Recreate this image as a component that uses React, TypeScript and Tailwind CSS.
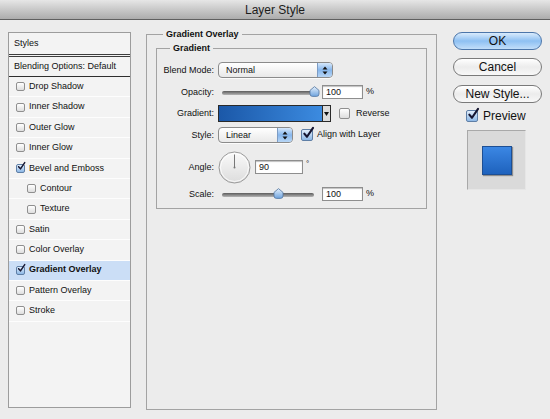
import React from "react";

const styleRows = [
  { label: "Drop Shadow" },
  { label: "Inner Shadow" },
  { label: "Outer Glow" },
  { label: "Inner Glow" },
  { label: "Bevel and Emboss", checked: true },
  { label: "Contour", indent: true },
  { label: "Texture", indent: true },
  { label: "Satin" },
  { label: "Color Overlay" },
  { label: "Gradient Overlay", checked: true, selected: true },
  { label: "Pattern Overlay" },
  { label: "Stroke" },
];

function CheckBox({ checked = false, size = "sm" }: { checked?: boolean; size?: "sm" | "md" | "lg" }) {
  const box =
    size === "sm" ? "w-[9px] h-[9px]" : size === "md" ? "w-[11px] h-[11px]" : "w-[12px] h-[12px]";
  const fill = checked
    ? "border-[#5f7fa6] from-[#e2eefb] to-[#8db8e6]"
    : "border-[#8f8f8f] from-white to-[#dedede]";
  return (
    <div className={`relative shrink-0 rounded-[2px] border bg-linear-to-b ${box} ${fill}`}>
      {checked && (
        <svg viewBox="0 0 12 12" className="absolute -top-[3px] left-0 w-[125%] h-[125%] overflow-visible">
          <path d="M2.2 6.4 L4.8 9.4 L10.6 0.8" fill="none" stroke="#151530" strokeWidth="2" strokeLinecap="round" strokeLinejoin="round" />
        </svg>
      )}
    </div>
  );
}

function Select({ value, width }: { value: string; width: string }) {
  return (
    <div className={`flex h-[16px] ${width} rounded-[4px] border border-[#8b8b8b] bg-linear-to-b from-white to-[#e9e9e9] shadow-[0_1px_0_rgba(255,255,255,0.8)] overflow-hidden`}>
      <div className="flex-1 pl-[7px] text-[9px] leading-[14px]">{value}</div>
      <div className="w-[15px] border-l border-[#7d9cc4] bg-linear-to-b from-[#d6e8fb] via-[#86b6ec] to-[#b8d6f5] flex items-center justify-center">
        <svg width="6" height="9" viewBox="0 0 6 9">
          <path d="M3 0.5 L5.5 3.5 H0.5 Z" fill="#111" />
          <path d="M3 8.5 L5.5 5.5 H0.5 Z" fill="#111" />
        </svg>
      </div>
    </div>
  );
}

function Slider({ value }: { value: number }) {
  return (
    <div className="relative w-[100px] h-[16px] ml-[4px]">
      <div className="absolute left-0 top-[7px] w-[92px] h-[4px] rounded-full bg-linear-to-b from-[#5c5c5c] to-[#b5b5b5]" />
      <svg width="11" height="11" viewBox="0 0 11 11" className="absolute top-[2px]" style={{ left: `${(value / 100) * 92 - 5.5}px` }}>
        <defs>
          <linearGradient id={`knob${value}`} x1="0" y1="0" x2="0" y2="1">
            <stop offset="0" stopColor="#e4f0fc" />
            <stop offset="1" stopColor="#6ea3de" />
          </linearGradient>
        </defs>
        <path d="M5.5 0.6 L10 4.4 V8 A2.4 2.4 0 0 1 7.6 10.4 H3.4 A2.4 2.4 0 0 1 1 8 V4.4 Z" fill={`url(#knob${value})`} stroke="#52759f" strokeWidth="0.8" />
      </svg>
    </div>
  );
}

function NumberBox({ value, width }: { value: string; width: string }) {
  return (
    <div className={`h-[14px] ${width} border border-[#8e8e8e] bg-white shadow-[inset_0_1px_1px_rgba(0,0,0,0.25)] pl-[3px] text-[9px] leading-[12px]`}>
      {value}
    </div>
  );
}

function Row({ label, className, children }: { label: string; className: string; children: React.ReactNode }) {
  return (
    <div className={`flex items-center ${className}`}>
      <div className="w-[57px] text-right text-[9px] leading-[11px] shrink-0">{label}</div>
      <div className="flex items-center ml-[4px]">{children}</div>
    </div>
  );
}

export default function App() {
  return (
    <div className="w-[550px] h-[419px] overflow-hidden bg-[#ececec] text-[#111] font-['Liberation_Sans',Arial,sans-serif]">
      <div className="h-[20px] border-b border-[#5f5f5f] bg-linear-to-b from-[#e6e6e6] to-[#acacac] flex items-center justify-center text-[12px] text-[#1c1c1c]">
        Layer Style
      </div>

      <div className="flex pl-[8px]">
        {/* styles list */}
        <div className="mt-[12px] w-[123px] h-[376px] border border-[#9c9c9c] bg-[#f3f3f3] text-[9px]">
          <div className="h-[24px] border-b-[3px] border-double border-[#3c3c3c] pl-[5px] pt-[5px] leading-[11px]">Styles</div>
          <div className="h-[20px] border-b border-[#2e2e2e] pl-[5px] flex items-center">Blending Options: Default</div>
          {styleRows.map((r) => (
            <div
              key={r.label}
              className={`h-[20.4px] flex items-center gap-[4px] border-b border-[#fdfdfd] ${r.indent ? "pl-[18px]" : "pl-[7px]"} ${r.selected ? "bg-[#cbdef6] font-bold" : ""}`}
            >
              <CheckBox checked={r.checked} />
              <span>{r.label}</span>
            </div>
          ))}
        </div>

        {/* gradient overlay */}
        <fieldset className="ml-[15px] mt-[9px] w-[291px] h-[381px] border border-[#a3a3a3]">
          <legend className="ml-[16px] px-[3px] text-[9px] font-bold leading-[11px]">Gradient Overlay</legend>
          <fieldset className="ml-[9px] mt-[3px] w-[271px] h-[166px] border border-[#a3a3a3]">
            <legend className="ml-[13px] px-[3px] text-[9px] font-bold leading-[11px]">Gradient</legend>
            <Row label="Blend Mode:" className="mt-[8px] h-[16px]">
              <Select value="Normal" width="w-[115px]" />
            </Row>
            <Row label="Opacity:" className="mt-[6px] h-[16px]">
              <Slider value={100} />
              <NumberBox value="100" width="w-[41px]" />
              <span className="ml-[3px] text-[9px]">%</span>
            </Row>
            <Row label="Gradient:" className="mt-[5px] h-[17px]">
              <div className="flex w-[113px] h-[17px] border border-[#2a2a2a]">
                <div className="flex-1 bg-linear-to-r from-[#1b58a8] to-[#3c8be0]" />
                <div className="w-[8px] border-l border-[#2a2a2a] bg-[#dcdcdc] flex items-center justify-center">
                  <svg width="5" height="4" viewBox="0 0 5 4"><path d="M0 0 H5 L2.5 4 Z" fill="#111" /></svg>
                </div>
              </div>
              <div className="ml-[8px]"><CheckBox size="md" /></div>
              <span className="ml-[6px] text-[9px]">Reverse</span>
            </Row>
            <Row label="Style:" className="mt-[5px] h-[16px]">
              <Select value="Linear" width="w-[75px]" />
              <div className="ml-[8px]"><CheckBox checked size="lg" /></div>
              <span className="ml-[4px] text-[9px]">Align with Layer</span>
            </Row>
            <Row label="Angle:" className="mt-[8px] h-[32px]">
              <svg width="33" height="33" viewBox="0 0 33 33">
                <defs>
                  <linearGradient id="dial" x1="0" y1="0" x2="0" y2="1">
                    <stop offset="0" stopColor="#fafafa" />
                    <stop offset="1" stopColor="#dcdcdc" />
                  </linearGradient>
                </defs>
                <circle cx="16.5" cy="16.5" r="15.5" fill="url(#dial)" stroke="#9a9a9a" strokeWidth="1" />
                <circle cx="16.5" cy="16.5" r="14" fill="none" stroke="#ffffff" strokeWidth="0.8" />
                <line x1="16.5" y1="16.5" x2="16.5" y2="3.5" stroke="#777" strokeWidth="1" />
                <circle cx="16.5" cy="16.5" r="1" fill="#777" />
              </svg>
              <div className="ml-[4px]"><NumberBox value="90" width="w-[48px]" /></div>
              <span className="ml-[3px] -mt-[6px] text-[8px]">°</span>
            </Row>
            <Row label="Scale:" className="mt-[3px] h-[16px]">
              <Slider value={61} />
              <NumberBox value="100" width="w-[41px]" />
              <span className="ml-[3px] text-[9px]">%</span>
            </Row>
          </fieldset>
        </fieldset>

        {/* buttons */}
        <div className="ml-[16px] mt-[12px] w-[89px] flex flex-col">
          <button className="h-[18px] rounded-full border border-[#4c76aa] bg-linear-to-b from-[#d9ebfc] via-[#8ec0f2] to-[#c2def9] text-[12px] leading-[16px] text-[#111]">
            OK
          </button>
          <button className="mt-[8px] h-[18px] rounded-full border border-[#7a7a7a] bg-linear-to-b from-white via-[#ececec] to-[#f8f8f8] text-[12px] leading-[16px] text-[#111]">
            Cancel
          </button>
          <button className="mt-[9px] h-[18px] rounded-full border border-[#7a7a7a] bg-linear-to-b from-white via-[#ececec] to-[#f8f8f8] text-[12px] leading-[16px] text-[#111]">
            New Style...
          </button>
          <div className="mt-[7px] h-[12px] pl-[13px] flex items-center gap-[5px]">
            <CheckBox checked size="lg" />
            <span className="text-[12px] leading-[12px]">Preview</span>
          </div>
          <div className="mt-[8px] ml-[14px] w-[59px] h-[60px] bg-[#dadada] border-t border-l border-[#a9a9a9] border-b border-r border-b-[#e6e6e6] border-r-[#e6e6e6] flex items-center justify-center">
            <div className="w-[30px] h-[29px] bg-linear-to-b from-[#3b87e4] to-[#1e62bd] border border-[#1d4f94] shadow-[1px_1px_1px_rgba(0,0,0,0.35)]" />
          </div>
        </div>
      </div>
    </div>
  );
}
